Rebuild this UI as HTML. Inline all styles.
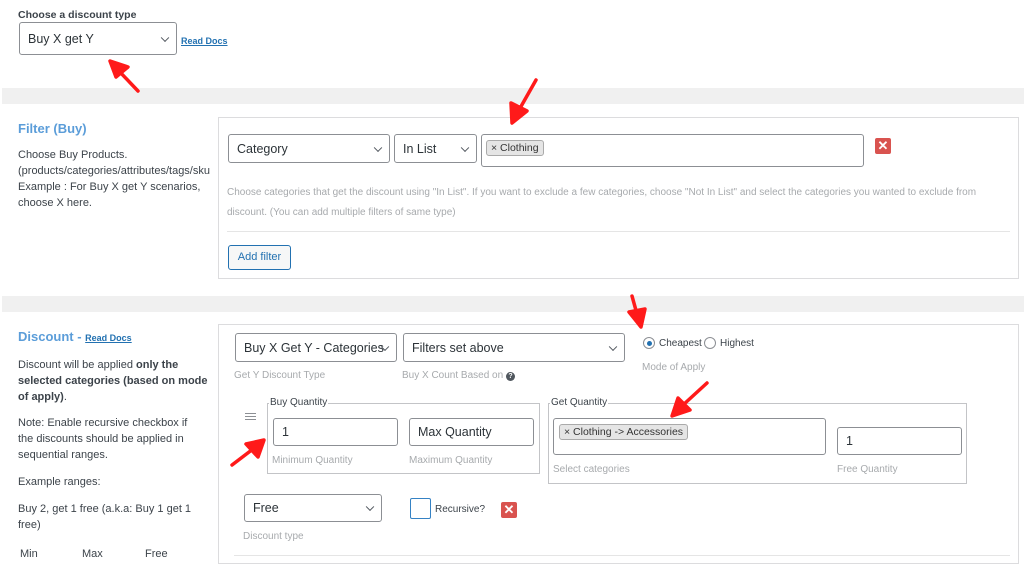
<!DOCTYPE html><html><head><style>
*{box-sizing:border-box;margin:0;padding:0}
body{width:1024px;height:559px;background:#fff;font-family:"Liberation Sans",sans-serif;position:relative;overflow:hidden;color:#3c434a}
.a{position:absolute}
.band{position:absolute;left:2px;right:0;background:#f0f0f0}
.sel{position:absolute;border:1px solid #8c8f94;border-radius:3px;background:#fff;font-size:12.5px;color:#2c3338;padding-left:8px;display:flex;align-items:center}
.sel .chev{position:absolute;right:8px;top:50%;width:6px;height:6px;border-right:1.5px solid #50575e;border-bottom:1.5px solid #50575e;transform:translateY(-70%) rotate(45deg)}
.hint{position:absolute;font-size:10px;color:#a7aaad}
.box{position:absolute;border:1px solid #dcdcde;background:#fff}
.t{position:absolute;font-size:11px;color:#3c434a;line-height:16px}
.blue{color:#5b9dd9}
.lnk{color:#2271b1;text-decoration:underline;font-size:9px;font-weight:bold}
.tag{position:absolute;background:#e5e5e5;border:1px solid #aaa;border-radius:3px;font-size:10.5px;color:#333;padding:1px 4px;line-height:12px}
.xbtn{position:absolute;width:16px;height:16px;background:#d9534f;border-radius:2px;color:#fff;font-size:13px;font-weight:bold;text-align:center;line-height:16px}
fieldset{position:absolute;border:1px solid #c3c4c7}
.leg{position:absolute;background:#fff;font-size:10px;color:#3c434a;padding:0 1px}
</style></head><body>
<div class="t" style="left:18px;top:7px;font-size:10.5px;font-weight:bold;color:#3c434a">Choose a discount type</div>
<div class="sel" style="left:19px;top:22px;width:158px;height:33px">Buy X get Y<span class="chev"></span></div>
<div class="a lnk" style="left:181px;top:36px">Read Docs</div>

<div class="band" style="top:88px;height:16px"></div>

<div class="a blue" style="left:18px;top:121px;font-size:13px;font-weight:bold">Filter (Buy)</div>
<div class="t" style="left:18px;top:147px;width:200px;overflow:hidden;white-space:nowrap">Choose Buy Products.<br>(products/categories/attributes/tags/sku<br>Example : For Buy X get Y scenarios,<br>choose X here.</div>
<div class="box" style="left:218px;top:117px;width:801px;height:162px"></div>
<div class="sel" style="left:228px;top:134px;width:162px;height:29px">Category<span class="chev"></span></div>
<div class="sel" style="left:394px;top:134px;width:83px;height:29px">In List<span class="chev"></span></div>
<div class="a" style="left:481px;top:134px;width:383px;height:33px;border:1px solid #8c8f94;border-radius:3px"></div>
<div class="tag" style="left:486px;top:140px">× Clothing</div>
<div class="xbtn" style="left:875px;top:138px">✕</div>
<div class="hint" style="left:227px;top:183px;line-height:20px;width:790px">Choose categories that get the discount using "In List". If you want to exclude a few categories, choose "Not In List" and select the categories you wanted to exclude from discount. (You can add multiple filters of same type)</div>
<div class="a" style="left:227px;top:231px;width:783px;height:1px;background:#e5e5e5"></div>
<div class="a" style="left:228px;top:245px;width:63px;height:25px;border:1px solid #2271b1;border-radius:3px;background:#f6f7f7;color:#2271b1;font-size:11px;text-align:center;line-height:23px">Add filter</div>

<div class="band" style="top:296px;height:16px"></div>

<div class="a" style="left:18px;top:329px;font-size:13px;font-weight:bold"><span class="blue">Discount - </span><span class="lnk">Read Docs</span></div>
<div class="t" style="left:18px;top:357px;width:192px">Discount will be applied <b>only the selected categories (based on mode of apply)</b>.</div>
<div class="t" style="left:18px;top:415px;width:186px">Note: Enable recursive checkbox if the discounts should be applied in sequential ranges.</div>
<div class="t" style="left:18px;top:474px">Example ranges:</div>
<div class="t" style="left:18px;top:501px;width:190px">Buy 2, get 1 free (a.k.a: Buy 1 get 1 free)</div>
<div class="t" style="left:20px;top:546px">Min</div><div class="t" style="left:82px;top:546px">Max</div><div class="t" style="left:145px;top:546px">Free</div>

<div class="box" style="left:218px;top:324px;width:801px;height:240px"></div>
<div class="sel" style="left:235px;top:333px;width:162px;height:29px">Buy X Get Y - Categories<span class="chev"></span></div>
<div class="sel" style="left:403px;top:333px;width:222px;height:29px">Filters set above<span class="chev"></span></div>
<div class="hint" style="left:234px;top:370px">Get Y Discount Type</div>
<div class="hint" style="left:402px;top:370px">Buy X Count Based on <span style="display:inline-block;width:9px;height:9px;border-radius:50%;background:#50575e;color:#fff;font-size:7px;text-align:center;line-height:9px;font-weight:bold">?</span></div>
<div class="a" style="left:643px;top:337px;width:12px;height:12px;border-radius:50%;border:1px solid #8c8f94;background:#fff"><div class="a" style="left:2.5px;top:2.5px;width:5px;height:5px;border-radius:50%;background:#2271b1"></div></div>
<div class="t" style="left:659px;top:336px;font-size:10px">Cheapest</div>
<div class="a" style="left:704px;top:337px;width:12px;height:12px;border-radius:50%;border:1px solid #8c8f94"></div>
<div class="t" style="left:720px;top:336px;font-size:10px">Highest</div>
<div class="hint" style="left:642px;top:362px">Mode of Apply</div>

<div class="a" style="left:245px;top:413px;width:11px;height:1px;background:#8c8f94;box-shadow:0 3px 0 #8c8f94,0 6px 0 #8c8f94"></div>
<fieldset style="left:267px;top:403px;width:273px;height:71px"></fieldset>
<div class="leg" style="left:269px;top:397px">Buy Quantity</div>
<div class="sel" style="left:273px;top:418px;width:125px;height:28px">1</div>
<div class="sel" style="left:409px;top:418px;width:125px;height:28px">Max Quantity</div>
<div class="hint" style="left:272px;top:455px">Minimum Quantity</div>
<div class="hint" style="left:409px;top:455px">Maximum Quantity</div>

<fieldset style="left:548px;top:403px;width:419px;height:81px"></fieldset>
<div class="leg" style="left:550px;top:397px">Get Quantity</div>
<div class="a" style="left:553px;top:418px;width:273px;height:37px;border:1px solid #8c8f94;border-radius:3px"></div>
<div class="tag" style="left:559px;top:424px">× Clothing -&gt; Accessories</div>
<div class="sel" style="left:837px;top:427px;width:125px;height:28px">1</div>
<div class="hint" style="left:553px;top:464px">Select categories</div>
<div class="hint" style="left:837px;top:464px">Free Quantity</div>

<div class="sel" style="left:244px;top:494px;width:138px;height:28px">Free<span class="chev"></span></div>
<div class="hint" style="left:243px;top:531px">Discount type</div>
<div class="a" style="left:410px;top:498px;width:21px;height:21px;border:1px solid #3582c4;border-radius:2px"></div>
<div class="t" style="left:435px;top:502px;font-size:10px">Recursive?</div>
<div class="xbtn" style="left:501px;top:502px">✕</div>
<div class="a" style="left:234px;top:555px;width:776px;height:1px;background:#e5e5e5"></div>

<svg class="a" style="left:0;top:0" width="1024" height="559">
<g fill="#ff1a1a" stroke="#ff1a1a" stroke-width="3.5" stroke-linecap="round" stroke-linejoin="round">
<line x1="138" y1="91" x2="118" y2="70"/><polygon points="110,61 128,67 116,77"/>
<line x1="536" y1="80" x2="519" y2="110"/><polygon points="512,123 511,103 527,111"/>
<line x1="632" y1="296" x2="637" y2="314"/><polygon points="641,327 629,312 645,309"/>
<line x1="232" y1="465" x2="253" y2="449"/><polygon points="264,440 258,457 246,444"/>
<line x1="707" y1="383" x2="683" y2="405"/><polygon points="672,416 678,398 690,410"/>
</g></svg>
</body></html>
